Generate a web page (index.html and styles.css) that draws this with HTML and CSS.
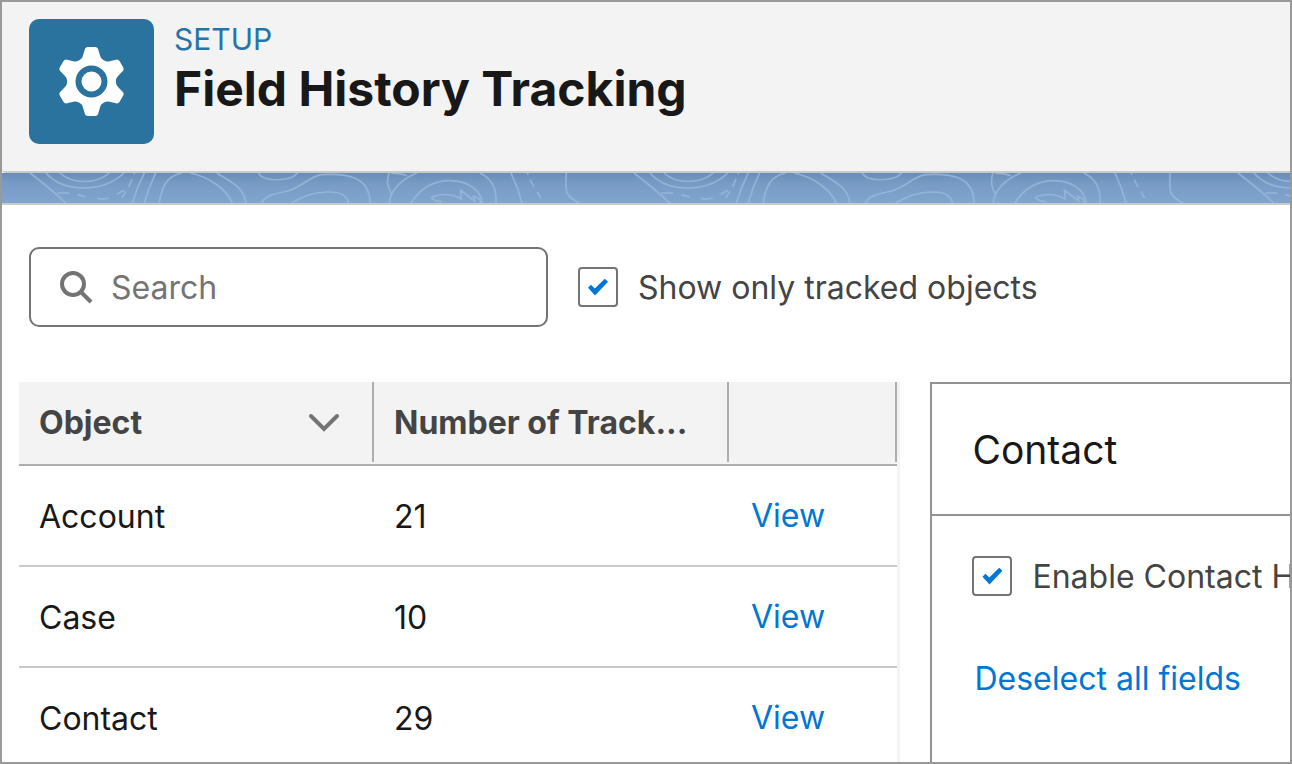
FILE: index.html
```html
<!DOCTYPE html>
<html lang="en">
<head>
    <meta charset="UTF-8" />
    <meta name="viewport" content="width=device-width, initial-scale=1.0" />
    <title>Field History Tracking</title>
    <link rel="stylesheet" href="styles.css">
</head>
<body>
    <div class="frame">
        <header class="page_header">
            <div class="header_icon">
                <svg viewBox="-62.5 -62.5 125 125" aria-hidden="true">
                    <defs>
                        <path id="tooth" d="M-12 -21 Q-9 -23 -8.5 -26 L-7 -31 Q-6.5 -34.5 -3.5 -34.5 H3.5 Q6.5 -34.5 7 -31 L8.5 -26 Q9 -23 12 -21 Z" />
                    </defs>
                    <g fill="#fff">
                        <circle r="24.5" />
                        <use href="#tooth" />
                        <use href="#tooth" transform="rotate(60)" />
                        <use href="#tooth" transform="rotate(120)" />
                        <use href="#tooth" transform="rotate(180)" />
                        <use href="#tooth" transform="rotate(240)" />
                        <use href="#tooth" transform="rotate(300)" />
                    </g>
                    <circle class="gear_ring" r="13" />
                </svg>
            </div>
            <div class="header_text">
                <p>SETUP</p>
                <h1>Field History Tracking</h1>
            </div>
        </header>

        <div class="banner">
            <svg width="100%" height="30" aria-hidden="true">
                <defs>
                    <pattern id="contours" width="1812" height="90" patternUnits="userSpaceOnUse" patternTransform="translate(-2 0) scale(0.3333)">
                        <g class="contour_lines">
                            <path d="M90 0 Q150 45 197 90" />
                            <path d="M138 0 C190 60 310 60 372 0 M180 0 C215 34 290 34 328 0" />
                            <path d="M172 60 H208 M233 65 L257 72 M292 76 Q308 80 326 75 M350 64 L372 52 M366 74 L378 55 M386 42 L396 18 M402 4 L404 0" />
                            <path d="M433 0 Q410 45 397 90 M467 0 Q445 45 433 90" />
                            <path d="M478 90 C485 40 500 10 545 0 M570 0 C630 12 680 50 697 90 M650 0 C690 25 735 45 737 90" />
                            <path d="M775 0 C790 27 870 27 893 0" />
                            <path d="M785 90 C800 60 840 62 870 52 C915 35 930 10 965 5 C1040 0 1110 10 1110 90" />
                            <path d="M875 90 C910 70 940 57 985 57 C1020 57 1040 65 1046 90" />
                            <path d="M1167 0 C1158 30 1165 45 1174 62 M1168 90 C1172 50 1205 20 1250 0 M1174 1 Q1200 0 1221 8" />
                            <path d="M1233 90 C1265 40 1310 23 1350 23 C1400 23 1445 50 1446 90" />
                            <path d="M1325 86 C1290 80 1290 72 1305 69 C1335 60 1360 65 1384 78 L1382 52 L1424 84 L1421 70 Q1442 75 1442 90" />
                            <path d="M1440 0 C1480 20 1490 50 1488 90 M1533 0 Q1555 45 1566 90" />
                            <path d="M1581 0 L1585 5 M1591 20 L1602 42 M1612 57 L1622 75" />
                            <path d="M1699 0 C1697 50 1690 65 1737 90" />
                        </g>
                    </pattern>
                </defs>
                <rect width="100%" height="30" fill="url(#contours)" />
            </svg>
        </div>

        <main class="content">
            <form class="filters">
                <div class="search_box">
                    <svg viewBox="0 0 34 34" aria-hidden="true">
                        <circle cx="13" cy="14" r="11" />
                        <path d="M21 22 L31 32" />
                    </svg>
                    <input type="search" placeholder="Search" aria-label="Search" />
                </div>
                <label class="check_option">
                    <input type="checkbox" checked />
                    <span>Show only tracked objects</span>
                </label>
            </form>

            <div class="columns">
                <div class="object_list">
                    <table>
                        <thead>
                            <tr>
                                <th scope="col">
                                    <div class="head_cell">
                                        <span>Object</span>
                                        <svg viewBox="0 0 32 20" aria-hidden="true"><path d="M3 3 L16 16 L29 3" /></svg>
                                    </div>
                                </th>
                                <th scope="col"><div class="head_cell"><span>Number of Track...</span></div></th>
                                <th scope="col" class="action_col" aria-label="Action"><div class="head_cell"></div></th>
                            </tr>
                        </thead>
                        <tbody>
                            <tr>
                                <td>Account</td>
                                <td>21</td>
                                <td><a href="#">View</a></td>
                            </tr>
                            <tr>
                                <td>Case</td>
                                <td>10</td>
                                <td><a href="#">View</a></td>
                            </tr>
                            <tr>
                                <td>Contact</td>
                                <td>29</td>
                                <td><a href="#">View</a></td>
                            </tr>
                        </tbody>
                    </table>
                </div>

                <section class="detail_panel">
                    <h2>Contact</h2>
                    <div class="panel_body">
                        <label class="check_option">
                            <input type="checkbox" checked />
                            <span>Enable Contact History</span>
                        </label>
                        <a href="#">Deselect all fields</a>
                    </div>
                </section>
            </div>
        </main>
    </div>
</body>
</html>
```

FILE: styles.css
```css
* {
    margin: 0;
    padding: 0;
    box-sizing: border-box;
    font-family: "Inter", "Liberation Sans", sans-serif;
}

body {
    background: #ffffff;
    color: #181818;
    font-size: 32px;
    line-height: 40px;
}

a {
    color: #0176d3;
    text-decoration: none;
}

a:hover {
    text-decoration: underline;
}

.frame {
    display: flex;
    flex-direction: column;
    height: 100vh;
    overflow: hidden;
    border: 2px solid #999999;
}

/* Page header */
.page_header {
    display: flex;
    flex-shrink: 0;
    gap: 20px;
    padding: 17px 27px 27px;
    background: #f3f3f3;
    border-bottom: 2px solid #c9c9c9;
    border-bottom-left-radius: 4px;
}

.header_icon {
    width: 125px;
    height: 125px;
    border-radius: 10px;
    background: #2a739e;
}

.header_icon svg {
    display: block;
}

.gear_ring {
    fill: none;
    stroke: #2a739e;
    stroke-width: 6px;
}

.header_text p {
    color: #2574a9;
    font-size: 30px;
}

.header_text h1 {
    font-size: 48px;
    line-height: 60px;
    font-weight: 700;
}

/* Blue strip with contour lines */
.banner {
    flex-shrink: 0;
    background: linear-gradient(#698db5, #769bc5 35%, #82a5ce);
    border-bottom: 2px solid #c9c9c9;
}

.banner svg {
    display: block;
}

.contour_lines {
    fill: none;
    stroke: #9bb9dc;
    stroke-width: 5px;
    stroke-opacity: 0.8;
}

.content {
    flex: 1;
    padding: 42px 0 0 17px;
}

/* Search and filter row */
.filters {
    display: flex;
    align-items: center;
    gap: 30px;
    padding-left: 10px;
    margin-bottom: 55px;
}

.search_box {
    display: flex;
    align-items: center;
    gap: 17px;
    width: 519px;
    height: 80px;
    padding: 0 29px;
    border: 2px solid #747474;
    border-radius: 10px;
}

.search_box svg {
    width: 34px;
    height: 34px;
    flex-shrink: 0;
    fill: none;
    stroke: #747474;
    stroke-width: 4px;
}

.search_box input {
    width: 100%;
    border: none;
    outline: none;
    background: none;
    color: #181818;
    font-size: 32px;
}

.search_box input::placeholder {
    color: #747474;
}

.check_option {
    display: flex;
    align-items: center;
    gap: 20px;
    color: #444444;
    line-height: 42px;
    white-space: nowrap;
}

.check_option input {
    display: grid;
    place-items: center;
    flex-shrink: 0;
    align-self: flex-start;
    width: 40px;
    height: 40px;
    appearance: none;
    background: #ffffff;
    border: 2px solid #747474;
    border-radius: 4px;
}

.filters .check_option {
    padding-top: 2px;
}

.check_option input:checked::before {
    content: "";
    width: 20px;
    height: 18px;
    background: #0176d3;
    clip-path: polygon(0 54%, 15% 38%, 34% 58%, 84% 4%, 100% 21%, 35% 97%);
}

.columns {
    display: flex;
    gap: 30px;
}

/* Object table */
.object_list {
    flex: 882 1 0;
    min-width: 0;
    border-right: 3px solid #f3f3f3;
}

table {
    width: 100%;
    table-layout: fixed;
    border-collapse: separate;
    border-spacing: 0;
}

th {
    width: 355px;
    padding-bottom: 2px;
    background: #f3f3f3;
    border-bottom: 2px solid #aeaeae;
    color: #444444;
    font-weight: 700;
    text-align: left;
}

th.action_col {
    width: auto;
}

.head_cell {
    display: flex;
    align-items: center;
    justify-content: space-between;
    height: 80px;
    padding: 2px 32px 0 20px;
    border-right: 2px solid #aeaeae;
    white-space: nowrap;
}

.head_cell svg {
    width: 32px;
    height: 20px;
    fill: none;
    stroke: #747474;
    stroke-width: 4px;
    stroke-linecap: round;
}

td {
    height: 101px;
    padding: 2px 20px 0;
    border-bottom: 2px solid #c9c9c9;
}

td:last-child {
    padding: 0 22px;
}

/* Field settings of the selected object */
.detail_panel {
    flex: 359 1 0;
    min-width: 0;
    border: 2px solid #939393;
    border-right: none;
}

.detail_panel h2 {
    padding: 42px 40px 40px;
    border-bottom: 2px solid #939393;
    font-size: 39px;
    line-height: 48px;
    font-weight: 400;
}

.panel_body {
    display: flex;
    flex-direction: column;
    gap: 61px;
    padding: 40px 0 80px 40px;
}

.panel_body > a {
    padding-left: 2px;
}
```
